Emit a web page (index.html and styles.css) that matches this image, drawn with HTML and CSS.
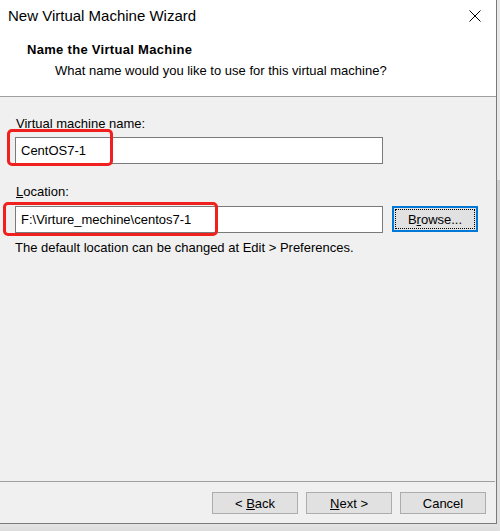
FILE: index.html
```html
<!DOCTYPE html>
<html>
<head>
<meta charset="utf-8">
<link rel="stylesheet" href="styles.css">
</head>
<body>
<div class="screen">
  <div class="window">
    <div class="titlebar">
      <span class="title">New Virtual Machine Wizard</span>
      <svg class="close" width="12" height="12" viewBox="0 0 12 12"><path d="M0.5 0.5 L11.5 11.5 M11.5 0.5 L0.5 11.5" stroke="#000" stroke-width="1" fill="none"/></svg>
    </div>
    <div class="header">
      <div class="h-title">Name the Virtual Machine</div>
      <div class="h-sub">What name would you like to use for this virtual machine?</div>
    </div>
    <div class="content">
      <div class="label">Virtual machine name:</div>
      <div class="row">
        <div class="input">CentOS7-1</div>
        <div class="mark mark1"></div>
      </div>
      <div class="label label2"><u>L</u>ocation:</div>
      <div class="row row2">
        <div class="input">F:\Virture_mechine\centos7-1</div>
        <div class="btn focus"><span class="dots">B<u>r</u>owse...</span></div>
        <div class="mark mark2"></div>
      </div>
      <div class="note">The default location can be changed at Edit &gt; Preferences.</div>
    </div>
    <div class="footer">
      <div class="btn">&lt;&nbsp;<u>B</u>ack</div>
      <div class="btn"><u>N</u>ext&nbsp;&gt;</div>
      <div class="btn">Cancel</div>
    </div>
  </div>
  <div class="side"></div>
</div>
</body>
</html>
```
FILE: styles.css
```css
html, body {
  margin: 0;
  padding: 0;
  background: #e6e6e6;
}
body {
  font-family: "Liberation Sans", Arial, sans-serif;
  font-size: 13px;
  color: #000;
}
.screen {
  display: flex;
  width: 500px;
  height: 531px;
  overflow: hidden;
  background: linear-gradient(#f0f0f0 0, #e4e4e4 524px, #dcdcdc 531px);
}
.window {
  width: 497px;
  height: 524px;
  box-sizing: border-box;
  border-right: 1px solid #7a7a7a;
  border-bottom: 1px solid #7a7a7a;
  background: #f0f0f0;
  display: flex;
  flex-direction: column;
  flex: none;
}
.side {
  flex: 1;
  background: linear-gradient(#e8e8e8 0, #e8e8e8 180px, #cfcfcf 180px, #cfcfcf 360px, #e0e0e0 360px);
}
.titlebar {
  height: 32px;
  background: #fff;
  display: flex;
  align-items: center;
  justify-content: space-between;
  padding: 0 15px 0 8px;
}
.title {
  font-size: 15px;
  position: relative;
  top: -1px;
}
.close {
  display: block;
}
.header {
  height: 65px;
  background: #fff;
  border-bottom: 1px solid #a0a0a0;
  box-sizing: border-box;
  padding: 9px 0 0 27px;
}
.h-title {
  font-weight: bold;
  letter-spacing: 0.3px;
  line-height: 18px;
}
.h-sub {
  margin: 4px 0 0 28px;
  line-height: 16px;
}
.content {
  flex: 1;
  padding: 18px 0 0 15px;
}
.label {
  line-height: 17px;
  padding-left: 1px;
}
.label2 {
  margin-top: 19px;
}
.row {
  position: relative;
  display: flex;
  align-items: flex-start;
  margin-top: 5px;
}
.row2 {
  margin-top: 6px;
}
.input {
  width: 368px;
  height: 27px;
  box-sizing: border-box;
  border: 1px solid #7a7a7a;
  background: #fff;
  padding-left: 5px;
  line-height: 25px;
}
.btn {
  width: 86px;
  height: 22px;
  box-sizing: border-box;
  border: 1px solid #adadad;
  background: #e1e1e1;
  display: flex;
  align-items: center;
  justify-content: center;
}
.btn.focus {
  margin-left: 9px;
  height: 26px;
  border: 2px solid #0078d7;
  padding: 1px;
}
.dots {
  flex: 1;
  align-self: stretch;
  border: 1px dotted #000;
  display: flex;
  align-items: center;
  justify-content: center;
}
.note {
  margin-top: 6px;
  line-height: 17px;
}
.mark {
  position: absolute;
  border: 3px solid #f0201e;
  border-radius: 5px;
}
.mark1 {
  left: -8px;
  top: -8px;
  width: 100px;
  height: 31px;
}
.mark2 {
  left: -12px;
  top: -4px;
  width: 209px;
  height: 28px;
}
.footer {
  height: 42px;
  box-sizing: border-box;
  border-top: 1px solid #a0a0a0;
  display: flex;
  justify-content: flex-end;
  gap: 8px;
  padding: 10px 9px 0 0;
  margin-right: 1px;
}
.footer .btn {
  width: 86px;
}
```
